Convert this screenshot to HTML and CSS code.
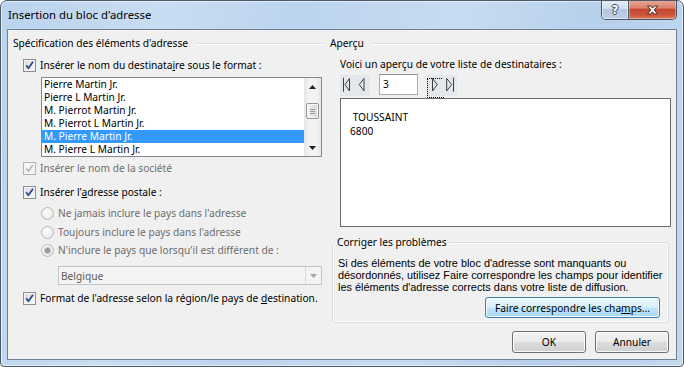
FILE: index.html
```html
<!DOCTYPE html>
<html lang="fr">
<head>
<meta charset="utf-8">
<title>Insertion du bloc d'adresse</title>
<link rel="stylesheet" href="styles.css">
</head>
<body>
<div class="window">
  <div class="titlebar">
    <span class="title">Insertion du bloc d'adresse</span>
    <div class="caption-btns">
      <div class="cap-btn help"><span class="qmark">?</span></div>
      <div class="cap-btn close">
        <svg width="13" height="10" viewBox="0 0 13 10"><path d="M1.5 1 H4.6 L6.5 3.2 L8.4 1 H11.5 L8.2 5 L11.5 9 H8.4 L6.5 6.8 L4.6 9 H1.5 L4.8 5 Z" fill="#fff" stroke="#4a2a26" stroke-width="1" stroke-linejoin="round"/></svg>
      </div>
    </div>
  </div>
  <div class="client">
    <section class="col">
      <div class="group-head"><span>Spécification des éléments d'adresse</span><i class="rule"></i></div>
      <div class="check row-cb1">
        <span class="cbox"><svg width="11" height="11" viewBox="0 0 11 11"><path d="M2.2 5.3 L4.4 8.3 L9 1.8" fill="none" stroke="#2f4f8f" stroke-width="1.9" stroke-linejoin="round"/></svg></span>
        <span>Insérer le nom du destinata<u>i</u>re sous le format :</span>
      </div>
      <div class="listbox">
        <ul class="items">
          <li>Pierre Martin Jr.</li>
          <li>Pierre L Martin Jr.</li>
          <li>M. Pierrot Martin Jr.</li>
          <li>M. Pierrot L Martin Jr.</li>
          <li class="selected">M. Pierre Martin Jr.</li>
          <li>M. Pierre L Martin Jr.</li>
        </ul>
        <div class="vscroll">
          <div class="sb-btn"><svg width="7" height="4" viewBox="0 0 7 4"><path d="M0 4 L3.5 0 L7 4 Z" fill="#202020"/></svg></div>
          <div class="sb-track"><div class="sb-thumb"><i></i><i></i><i></i></div></div>
          <div class="sb-btn"><svg width="7" height="4" viewBox="0 0 7 4"><path d="M0 0 L3.5 4 L7 0 Z" fill="#202020"/></svg></div>
        </div>
      </div>
      <div class="check disabled row-cb2">
        <span class="cbox"><svg width="11" height="11" viewBox="0 0 11 11"><path d="M2.4 5.6 L4.4 8.2 L8.8 2.2" fill="none" stroke="#a9a9a9" stroke-width="1.2"/></svg></span>
        <span>Insérer le nom de la société</span>
      </div>
      <div class="check row-cb3">
        <span class="cbox"><svg width="11" height="11" viewBox="0 0 11 11"><path d="M2.2 5.3 L4.4 8.3 L9 1.8" fill="none" stroke="#2f4f8f" stroke-width="1.9" stroke-linejoin="round"/></svg></span>
        <span>Insérer l'<u>a</u>dresse postale :</span>
      </div>
      <div class="radio disabled row-r1"><span class="rbox"></span><span>Ne jamais inclure le pays dans l'adresse</span></div>
      <div class="radio disabled row-r2"><span class="rbox"></span><span>Toujours inclure le pays dans l'adresse</span></div>
      <div class="radio disabled row-r3"><span class="rbox on"></span><span>N'inclure le pays que lorsqu'il est différent de :</span></div>
      <div class="combo">
        <span class="combo-text">Belgique</span>
        <span class="combo-btn"><svg width="7" height="4" viewBox="0 0 7 4"><path d="M0 0 L3.5 4 L7 0 Z" fill="#a6a6a6"/></svg></span>
      </div>
      <div class="check row-cb4">
        <span class="cbox"><svg width="11" height="11" viewBox="0 0 11 11"><path d="M2.2 5.3 L4.4 8.3 L9 1.8" fill="none" stroke="#2f4f8f" stroke-width="1.9" stroke-linejoin="round"/></svg></span>
        <span>Format de l'adresse selon la région/le pays de <u>d</u>estination.</span>
      </div>
    </section>

    <section class="col right">
      <div class="group-head"><span>Aperçu</span><i class="rule"></i></div>
      <div class="hint">Voici un aperçu de votre liste de destinataires :</div>
      <div class="nav">
        <span class="nav-btn"><svg width="15" height="21" viewBox="0 0 15 21"><path d="M3.5 2.7 V16.7 M5 9.5 L9.5 3.5 V16 Z" fill="none" stroke="#3c3c3c" stroke-width="1"/></svg></span>
        <span class="nav-btn"><svg width="15" height="21" viewBox="0 0 15 21"><path d="M4.3 9.5 L9 3.5 V16 Z" fill="none" stroke="#3c3c3c" stroke-width="1"/></svg></span>
        <span class="nav-input">3</span>
        <span class="nav-btn focus"><svg width="15" height="21" viewBox="0 0 15 21"><path d="M10.3 9.5 L5.5 3.5 V16 Z" fill="none" stroke="#3c3c3c" stroke-width="1"/></svg></span>
        <span class="nav-btn"><svg width="15" height="21" viewBox="0 0 15 21"><path d="M9.7 9.5 L4.7 3.5 V16 Z M11.5 2.7 V16.7" fill="none" stroke="#3c3c3c" stroke-width="1"/></svg></span>
      </div>
      <div class="preview">
        <div>&nbsp;TOUSSAINT</div>
        <div>6800</div>
      </div>
      <fieldset class="fix">
        <legend>Corriger les problèmes</legend>
        <p><span>Si des éléments de votre bloc d'adresse sont manquants ou</span><span>désordonnés, utilisez Faire correspondre les champs pour identifier</span><span>les éléments d'adresse corrects dans votre liste de diffusion.</span></p>
        <div class="fix-actions"><span class="btn default">Faire correspondre les cha<u>m</u>ps...</span></div>
      </fieldset>
      <div class="actions">
        <span class="btn">OK</span>
        <span class="btn">Annuler</span>
      </div>
    </section>
  </div>
</div>
</body>
</html>
```

FILE: styles.css
```css
* { box-sizing: border-box; }
html, body { margin: 0; padding: 0; }
body {
  width: 684px;
  height: 367px;
  overflow: hidden;
  background: #ffffff;
  font-family: "Noto Sans", "Open Sans", sans-serif;
  font-size: 10.2px;
  line-height: 14px;
  color: #000;
}
u { text-decoration: underline; text-underline-offset: 1px; }

.window {
  width: 684px;
  height: 367px;
  border: 1px solid #4e5a66;
  border-radius: 7px 7px 4px 4px;
  background: linear-gradient(100deg, #bad3ed 0%, #c9ddf2 22%, #bcd4ee 40%, #c7dcf1 62%, #b7d0eb 80%, #c2d8ef 100%);
  box-shadow: inset 0 0 0 1px rgba(255,255,255,0.55);
  display: flex;
  flex-direction: column;
  overflow: hidden;
}

.titlebar {
  height: 28px;
  display: flex;
  justify-content: space-between;
  align-items: flex-start;
}
.title { padding: 7px 0 0 7px; line-height: 14px; font-size: 11.3px; color: #000; }

.caption-btns {
  display: flex;
  margin: -1px 6px 0 0;
  height: 20px;
  border: 1px solid #4a5664;
  border-top: none;
  border-radius: 0 0 5px 5px;
  overflow: hidden;
}
.cap-btn {
  display: flex;
  align-items: center;
  justify-content: center;
  height: 19px;
}
.help {
  width: 27px;
  border-right: 1px solid #4a5664;
  background: linear-gradient(#e6eef7 0%, #d2dfee 45%, #b3c7de 50%, #bed0e5 100%);
  box-shadow: inset 0 0 0 1px rgba(255,255,255,0.5);
}
.qmark {
  font-family: "DejaVu Sans", sans-serif;
  font-weight: bold;
  font-size: 12px;
  line-height: 12px;
  color: #fff;
  text-shadow: 1px 0 0 #3f4d5c, -1px 0 0 #3f4d5c, 0 1px 0 #3f4d5c, 0 -1px 0 #3f4d5c;
}
.close {
  width: 47px;
  background: linear-gradient(#eaa99a 0%, #d9806c 42%, #c4462e 50%, #cd553b 80%, #e07f5f 100%);
  box-shadow: inset 0 0 0 1px rgba(255,255,255,0.35);
}

.client {
  margin: 0 6px;
  height: 331px;
  border: 1px solid #6e8094;
  background: #f0f0f0;
  display: grid;
  grid-template-columns: 310px 341px;
  column-gap: 7px;
  padding: 6px 5px 0 5px;
  align-items: start;
}
.col { display: flex; flex-direction: column; }

.group-head {
  display: flex;
  align-items: center;
  height: 14px;
  white-space: nowrap;
}
.group-head .rule {
  flex: 1;
  height: 1px;
  margin-left: 6px;
  background: #d5dfe5;
  box-shadow: 0 1px 0 #fff;
}

.check, .radio {
  display: flex;
  align-items: center;
  height: 14px;
  white-space: nowrap;
  gap: 4px;
}
.check { padding-left: 10px; }
.radio { padding-left: 28px; }
.disabled { color: #6d6d6d; }

.cbox {
  width: 13px;
  height: 13px;
  flex: none;
  border: 1px solid #8e8f8f;
  background: linear-gradient(135deg, #d3d7dc 0%, #eef0f2 60%, #fbfbfb 100%);
  box-shadow: inset 0 0 0 1px #f4f4f4;
  display: flex;
  align-items: center;
  justify-content: center;
}
.cbox svg { display: block; }
.disabled .cbox {
  border-color: #b5b5b5;
  background: #f4f4f4;
}
.rbox {
  width: 13px;
  height: 13px;
  flex: none;
  border-radius: 50%;
  border: 1px solid #b8b8b8;
  background: radial-gradient(circle at 40% 35%, #fdfdfd 0%, #ececec 70%, #e2e2e2 100%);
  display: flex;
  align-items: center;
  justify-content: center;
}
.rbox.on::after {
  content: "";
  width: 5px;
  height: 5px;
  border-radius: 50%;
  background: #9b9b9b;
  box-shadow: 0 0 0 1px #c4c4c4;
}

.row-cb1 { margin-top: 8px; }
.row-cb2 { margin-top: 4px; }
.row-cb3 { margin-top: 10px; }
.row-r1 { margin-top: 7px; }
.row-r2 { margin-top: 5px; }
.row-r3 { margin-top: 4px; }
.row-cb4 { margin-top: 6px; }

.listbox {
  margin: 5px 0 0 28px;
  width: 281px;
  height: 80px;
  border: 1px solid #828790;
  background: #fff;
  display: flex;
  overflow: hidden;
}
.items {
  list-style: none;
  margin: 0;
  padding: 0;
  flex: 1;
  overflow: hidden;
}
.items li {
  height: 13px;
  line-height: 13px;
  padding-left: 2px;
  white-space: nowrap;
}
.items li.selected { background: #3399ff; color: #fff; }

.vscroll {
  width: 17px;
  flex: none;
  display: flex;
  flex-direction: column;
  background: linear-gradient(90deg, #e6e6e6, #f3f3f3 30%, #f3f3f3 70%, #e6e6e6);
}
.sb-btn {
  height: 17px;
  display: flex;
  align-items: center;
  justify-content: center;
}
.sb-track { flex: 1; }
.sb-thumb {
  margin: 8px 2px 0 2px;
  height: 16px;
  border: 1px solid #979797;
  border-radius: 2px;
  background: linear-gradient(90deg, #f4f4f4 0%, #e6e6e6 50%, #d6d6d6 100%);
  box-shadow: inset 0 0 0 1px #fafafa;
  display: flex;
  flex-direction: column;
  justify-content: center;
  align-items: center;
  gap: 1px;
}
.sb-thumb i {
  width: 5px;
  height: 1px;
  background: #9a9a9a;
}

.combo {
  margin: 9px 0 0 45px;
  width: 264px;
  height: 19px;
  border: 1px solid #c1c4c7;
  background: #f4f4f4;
  display: flex;
  align-items: center;
  color: #5b5b5b;
}
.combo-text { flex: 1; padding-left: 2px; }
.combo-btn {
  width: 16px;
  height: 17px;
  border-left: 1px solid #dadada;
  display: flex;
  align-items: center;
  justify-content: center;
}

.hint { margin: 7px 0 0 10px; height: 14px; white-space: nowrap; }

.nav {
  margin: 3px 0 0 10px;
  display: flex;
  align-items: flex-start;
  height: 22px;
}
.nav-btn {
  width: 15px;
  height: 21px;
  margin-top: 1px;
  background: #e4e8ec;
  position: relative;
}
.nav-btn svg { display: block; }
.nav-btn.focus::after {
  content: "";
  position: absolute;
  left: 0;
  top: 3px;
  width: 15px;
  height: 18px;
  border: 1px dotted #000;
}
.nav-input {
  width: 39px;
  height: 21px;
  margin: 0 9px;
  border: 1px solid #abadb3;
  border-top-color: #8e9299;
  background: #fff;
  padding-left: 3px;
  line-height: 19px;
}

.preview {
  margin: 2px 0 0 10px;
  width: 331px;
  height: 129px;
  border: 1px solid #6b6b6b;
  background: #fff;
  padding: 11px 0 0 9px;
}

.fix {
  margin: 8px 2px 0 2px;
  min-width: 0;
  height: 88px;
  border: 1px solid #d5dfe5;
  border-radius: 3px;
  box-shadow: inset 0 0 0 1px rgba(255,255,255,0.8);
  padding: 8px 8px 4px 5px;
}
.fix legend {
  padding: 0 2px;
  margin-left: -3px;
  line-height: 14px;
  height: 14px;
}
.fix p {
  margin: 0;
  display: flex;
  flex-direction: column;
  font-family: "Liberation Sans", Arial, sans-serif;
  font-size: 10.9px;
}
.fix p span {
  display: block;
  height: 12px;
  line-height: 12px;
  white-space: nowrap;
}
.fix-actions {
  display: flex;
  justify-content: flex-end;
  margin-top: 4px;
}

.btn {
  display: flex;
  align-items: center;
  justify-content: center;
  height: 21px;
  border: 1px solid #707070;
  border-radius: 3px;
  background: linear-gradient(#f2f2f2 0%, #ebebeb 48%, #dddddd 52%, #cfcfcf 100%);
  box-shadow: inset 0 0 0 1px #fbfbfb;
  white-space: nowrap;
}
.btn.default {
  width: 175px;
  border-color: #3c7fb1;
  background: linear-gradient(#eaf6fd 0%, #d9f0fc 48%, #bee6fd 52%, #a7d9f5 100%);
  box-shadow: inset 0 0 0 1px #f4fbfe;
}
.actions {
  display: flex;
  justify-content: flex-end;
  gap: 9px;
  margin: 8px 2px 0 0;
}
.actions .btn { width: 74px; height: 22px; }
```
